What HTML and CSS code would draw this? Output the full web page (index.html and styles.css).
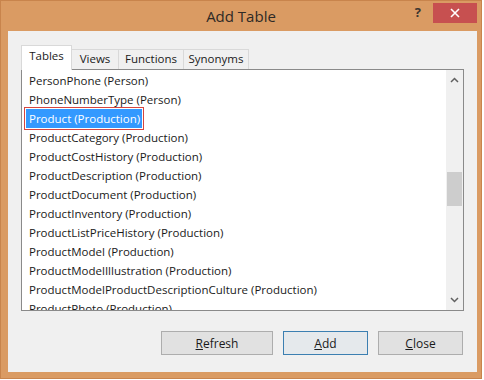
FILE: index.html
```html
<!DOCTYPE html>
<html lang="en">
<head>
    <meta charset="UTF-8">
    <title>Add Table</title>
    <link rel="stylesheet" href="styles.css">
</head>
<body>
    <div class="window">
        <div class="titlebar">
            <div></div>
            <div class="title">Add Table</div>
            <div class="controls">
                <span class="help">?</span>
                <span class="close">
                    <svg width="10" height="10" viewBox="0 0 10 10">
                        <path d="M1 1 L9 9 M9 1 L1 9" stroke="#fff" stroke-width="1.6"/>
                    </svg>
                </span>
            </div>
        </div>
        <div class="client">
            <div class="tabs">
                <div class="tab active">Tables</div>
                <div class="tab views">Views</div>
                <div class="tab functions">Functions</div>
                <div class="tab synonyms">Synonyms</div>
            </div>
            <div class="listbox">
                <div class="items">
                    <div class="item">PersonPhone (Person)</div>
                    <div class="item">PhoneNumberType (Person)</div>
                    <div class="item selected">Product (Production)</div>
                    <div class="item">ProductCategory (Production)</div>
                    <div class="item">ProductCostHistory (Production)</div>
                    <div class="item">ProductDescription (Production)</div>
                    <div class="item">ProductDocument (Production)</div>
                    <div class="item">ProductInventory (Production)</div>
                    <div class="item">ProductListPriceHistory (Production)</div>
                    <div class="item">ProductModel (Production)</div>
                    <div class="item">ProductModelIllustration (Production)</div>
                    <div class="item">ProductModelProductDescriptionCulture (Production)</div>
                    <div class="item">ProductPhoto (Production)</div>
                </div>
                <div class="scrollbar">
                    <svg class="arrow" width="9" height="6" viewBox="0 0 9 6">
                        <path d="M1 5 L4.5 1.5 L8 5" fill="none" stroke="#606060" stroke-width="1.5"/>
                    </svg>
                    <div class="track">
                        <div class="thumb"></div>
                    </div>
                    <svg class="arrow" width="9" height="6" viewBox="0 0 9 6">
                        <path d="M1 1 L4.5 4.5 L8 1" fill="none" stroke="#606060" stroke-width="1.5"/>
                    </svg>
                </div>
            </div>
            <div class="buttons">
                <button class="btn wide"><u>R</u>efresh</button>
                <button class="btn default"><u>A</u>dd</button>
                <button class="btn"><u>C</u>lose</button>
            </div>
        </div>
    </div>
</body>
</html>
```

FILE: styles.css
```css
body {
    margin: 0;
    background: #ffffff;
    font-family: "Open Sans", "Noto Sans", sans-serif;
}
.window {
    width: 480px;
    height: 377px;
    background: #da9b63;
    border: 1px solid #c8844c;
    display: flex;
    flex-direction: column;
}
.titlebar {
    height: 30px;
    display: grid;
    grid-template-columns: 1fr auto 1fr;
    align-items: start;
}
.title {
    font-size: 15px;
    color: #2e2a26;
    padding-top: 5px;
}
.controls {
    display: flex;
    justify-content: flex-end;
    align-items: center;
    padding-top: 2px;
}
.help {
    font-size: 13px;
    font-weight: bold;
    color: #3a3530;
    margin-right: 12px;
    margin-top: -3px;
}
.close {
    width: 44px;
    height: 20px;
    background: #c75050;
    display: flex;
    align-items: center;
    justify-content: center;
    margin-right: 4px;
}
.client {
    flex: 1;
    margin: 0 4px 6px 7px;
    background: #f0f0f0;
    padding: 15px 13px 0 13px;
}
.tabs {
    display: flex;
    align-items: flex-end;
    height: 23px;
    position: relative;
    z-index: 1;
}
.tab {
    font-size: 11.5px;
    color: #1a1a1a;
    height: 19px;
    line-height: 18px;
    text-align: center;
    background: #f0f0f0;
    border: 1px solid #d9d9d9;
    border-bottom: none;
    margin-left: -1px;
}
.tab.active {
    width: 49px;
    height: 24px;
    line-height: 20px;
    background: #ffffff;
    margin-left: 0;
    margin-bottom: -1px;
}
.tab.views {
    width: 46px;
}
.tab.functions {
    width: 64px;
}
.tab.synonyms {
    width: 64px;
}
.listbox {
    height: 240px;
    width: 441px;
    background: #ffffff;
    border: 1px solid #8a8a8a;
    display: flex;
}
.items {
    flex: 1;
    overflow: hidden;
    padding-top: 1px;
    padding-left: 4px;
}
.item {
    font-size: 11.5px;
    color: #1a1a1a;
    height: 19px;
    line-height: 19px;
    padding: 0 2px 0 3px;
    width: fit-content;
    white-space: nowrap;
}
.item.selected {
    background: #3399ff;
    color: #ffffff;
    outline: 1px solid #d6453f;
    outline-offset: 1px;
}
.scrollbar {
    width: 17px;
    background: #f0f0f0;
    display: flex;
    flex-direction: column;
    align-items: center;
}
.arrow {
    margin: 7px 0;
}
.track {
    flex: 1;
    width: 100%;
    padding-top: 82px;
}
.thumb {
    width: 15px;
    margin-left: 1px;
    height: 34px;
    background: #cdcdcd;
}
.buttons {
    display: flex;
    justify-content: flex-end;
    gap: 10px;
    margin-top: 20px;
    padding-right: 1px;
}
.btn {
    font-family: "Open Sans", "Noto Sans", sans-serif;
    font-size: 12px;
    color: #1a1a1a;
    height: 24px;
    width: 85px;
    background: #e1e1e1;
    border: 1px solid #adadad;
    padding: 0;
}
.btn.wide {
    width: 112px;
}
.btn.default {
    border-color: #3c7fb1;
    background: #e5e9ec;
}
```
